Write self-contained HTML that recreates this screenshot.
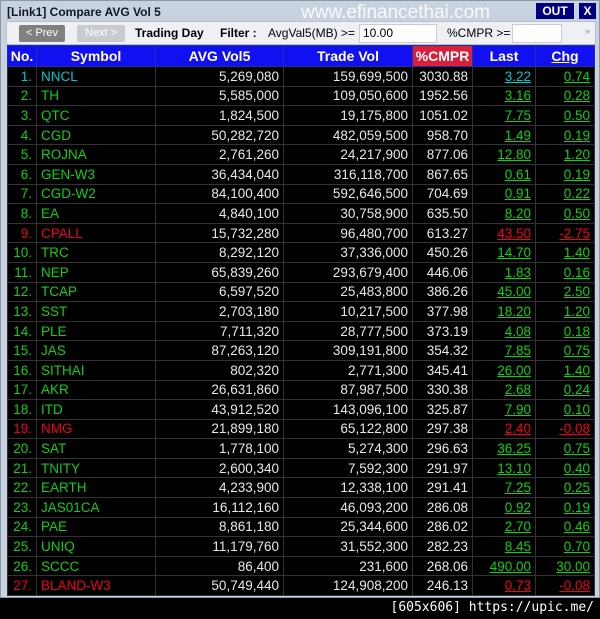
<!DOCTYPE html>
<html><head><meta charset="utf-8"><style>
*{margin:0;padding:0;box-sizing:border-box}
body{width:600px;height:619px;background:#000;font-family:"Liberation Sans",Arial,sans-serif;position:relative;overflow:hidden}
#win{position:absolute;left:0;top:0;width:600px;height:598px;background:#c9d3df;border:1px solid #8a98a8}
#title{position:absolute;left:6px;top:4px;font-size:12px;font-weight:bold;color:#101828}
#wm{position:absolute;left:300px;top:1px;font-size:19px;color:#fff;opacity:.9}
.btnT{position:absolute;top:2px;height:16px;background:#000080;color:#fff;font-weight:bold;font-size:12px;text-align:center;line-height:16px}
#tb{position:absolute;left:5px;top:20px;width:590px;height:24px;background:#eef0f3;border:1px solid #b8c0cc}
.tbb{position:absolute;top:3px;height:17px;border-radius:2px;font-size:11px;color:#fff;text-align:center;line-height:17px}
.t{position:absolute;top:4px;font-size:12px;color:#000}
.inp{position:absolute;top:2px;height:19px;background:#fff;border:1px solid #ccc;font-size:12px;line-height:17px;padding-left:3px}
table{position:absolute;left:7px;top:45px;border-collapse:collapse;width:587px;table-layout:fixed;background:#000}
th{background:#1010f0;color:#fff;font-size:14px;font-weight:bold;height:21px;border:1px solid #2030a0;text-align:center}
td{height:19.6px;font-size:13.5px;border:1px solid #333;padding:0 4px;white-space:nowrap;color:#e8e8e8;background:#000}
td.n{text-align:right}
td.l{text-align:right;text-decoration:underline}
tr.c td.s,tr.c td.i{color:#00c8c8}
tr.g td.s,tr.g td.i{color:#10d010}
tr.r td.s,tr.r td.i{color:#f00020}
td.i{text-align:right}
.cy{color:#00c8c8!important}.gr{color:#10d010!important}.rd{color:#f00020!important}
#foot{position:absolute;right:6px;top:600px;color:#fff;font-size:13px;font-family:"DejaVu Sans Mono",monospace}
</style></head><body>
<div id="win">
<div id="title">[Link1] Compare AVG Vol 5</div>
<div id="wm">www.efinancethai.com</div>
<div class="btnT" style="left:535px;width:38px">OUT</div>
<div class="btnT" style="left:578px;width:17px">X</div>
<div id="tb">
<div class="tbb" style="left:12px;width:46px;background:#808080">&lt; Prev</div>
<div class="tbb" style="left:70px;width:48px;background:#c8ccd0">Next &gt;</div>
<div class="t" style="left:128px;font-weight:bold">Trading Day</div>
<div class="t" style="left:213px;font-weight:bold">Filter :</div>
<div class="t" style="left:261px">AvgVal5(MB) &gt;=</div>
<div class="inp" style="left:352px;width:78px">10.00</div>
<div class="t" style="left:440px">%CMPR &gt;=</div>
<div class="inp" style="left:505px;width:50px"></div>
<div class="t" style="left:578px;font-size:9px;color:#888">»</div>
</div>
</div>
<table>
<colgroup><col style="width:29px"><col style="width:119px"><col style="width:128px"><col style="width:129px"><col style="width:60px"><col style="width:63px"><col style="width:59px"></colgroup>
<tr><th>No.</th><th>Symbol</th><th>AVG Vol5</th><th>Trade Vol</th><th style="background:#d8203c">%CMPR</th><th>Last</th><th style="text-decoration:underline">Chg</th></tr>
<tr class="c"><td class="i">1.</td><td class="s">NNCL</td><td class="n">5,269,080</td><td class="n">159,699,500</td><td class="n">3030.88</td><td class="l cy">3.22</td><td class="l gr">0.74</td></tr>
<tr class="g"><td class="i">2.</td><td class="s">TH</td><td class="n">5,585,000</td><td class="n">109,050,600</td><td class="n">1952.56</td><td class="l gr">3.16</td><td class="l gr">0.28</td></tr>
<tr class="g"><td class="i">3.</td><td class="s">QTC</td><td class="n">1,824,500</td><td class="n">19,175,800</td><td class="n">1051.02</td><td class="l gr">7.75</td><td class="l gr">0.50</td></tr>
<tr class="g"><td class="i">4.</td><td class="s">CGD</td><td class="n">50,282,720</td><td class="n">482,059,500</td><td class="n">958.70</td><td class="l gr">1.49</td><td class="l gr">0.19</td></tr>
<tr class="g"><td class="i">5.</td><td class="s">ROJNA</td><td class="n">2,761,260</td><td class="n">24,217,900</td><td class="n">877.06</td><td class="l gr">12.80</td><td class="l gr">1.20</td></tr>
<tr class="g"><td class="i">6.</td><td class="s">GEN-W3</td><td class="n">36,434,040</td><td class="n">316,118,700</td><td class="n">867.65</td><td class="l gr">0.61</td><td class="l gr">0.19</td></tr>
<tr class="g"><td class="i">7.</td><td class="s">CGD-W2</td><td class="n">84,100,400</td><td class="n">592,646,500</td><td class="n">704.69</td><td class="l gr">0.91</td><td class="l gr">0.22</td></tr>
<tr class="g"><td class="i">8.</td><td class="s">EA</td><td class="n">4,840,100</td><td class="n">30,758,900</td><td class="n">635.50</td><td class="l gr">8.20</td><td class="l gr">0.50</td></tr>
<tr class="r"><td class="i">9.</td><td class="s">CPALL</td><td class="n">15,732,280</td><td class="n">96,480,700</td><td class="n">613.27</td><td class="l rd">43.50</td><td class="l rd">-2.75</td></tr>
<tr class="g"><td class="i">10.</td><td class="s">TRC</td><td class="n">8,292,120</td><td class="n">37,336,000</td><td class="n">450.26</td><td class="l gr">14.70</td><td class="l gr">1.40</td></tr>
<tr class="g"><td class="i">11.</td><td class="s">NEP</td><td class="n">65,839,260</td><td class="n">293,679,400</td><td class="n">446.06</td><td class="l gr">1.83</td><td class="l gr">0.16</td></tr>
<tr class="g"><td class="i">12.</td><td class="s">TCAP</td><td class="n">6,597,520</td><td class="n">25,483,800</td><td class="n">386.26</td><td class="l gr">45.00</td><td class="l gr">2.50</td></tr>
<tr class="g"><td class="i">13.</td><td class="s">SST</td><td class="n">2,703,180</td><td class="n">10,217,500</td><td class="n">377.98</td><td class="l gr">18.20</td><td class="l gr">1.20</td></tr>
<tr class="g"><td class="i">14.</td><td class="s">PLE</td><td class="n">7,711,320</td><td class="n">28,777,500</td><td class="n">373.19</td><td class="l gr">4.08</td><td class="l gr">0.18</td></tr>
<tr class="g"><td class="i">15.</td><td class="s">JAS</td><td class="n">87,263,120</td><td class="n">309,191,800</td><td class="n">354.32</td><td class="l gr">7.85</td><td class="l gr">0.75</td></tr>
<tr class="g"><td class="i">16.</td><td class="s">SITHAI</td><td class="n">802,320</td><td class="n">2,771,300</td><td class="n">345.41</td><td class="l gr">26.00</td><td class="l gr">1.40</td></tr>
<tr class="g"><td class="i">17.</td><td class="s">AKR</td><td class="n">26,631,860</td><td class="n">87,987,500</td><td class="n">330.38</td><td class="l gr">2.68</td><td class="l gr">0.24</td></tr>
<tr class="g"><td class="i">18.</td><td class="s">ITD</td><td class="n">43,912,520</td><td class="n">143,096,100</td><td class="n">325.87</td><td class="l gr">7.90</td><td class="l gr">0.10</td></tr>
<tr class="r"><td class="i">19.</td><td class="s">NMG</td><td class="n">21,899,180</td><td class="n">65,122,800</td><td class="n">297.38</td><td class="l rd">2.40</td><td class="l rd">-0.08</td></tr>
<tr class="g"><td class="i">20.</td><td class="s">SAT</td><td class="n">1,778,100</td><td class="n">5,274,300</td><td class="n">296.63</td><td class="l gr">36.25</td><td class="l gr">0.75</td></tr>
<tr class="g"><td class="i">21.</td><td class="s">TNITY</td><td class="n">2,600,340</td><td class="n">7,592,300</td><td class="n">291.97</td><td class="l gr">13.10</td><td class="l gr">0.40</td></tr>
<tr class="g"><td class="i">22.</td><td class="s">EARTH</td><td class="n">4,233,900</td><td class="n">12,338,100</td><td class="n">291.41</td><td class="l gr">7.25</td><td class="l gr">0.25</td></tr>
<tr class="g"><td class="i">23.</td><td class="s">JAS01CA</td><td class="n">16,112,160</td><td class="n">46,093,200</td><td class="n">286.08</td><td class="l gr">0.92</td><td class="l gr">0.19</td></tr>
<tr class="g"><td class="i">24.</td><td class="s">PAE</td><td class="n">8,861,180</td><td class="n">25,344,600</td><td class="n">286.02</td><td class="l gr">2.70</td><td class="l gr">0.46</td></tr>
<tr class="g"><td class="i">25.</td><td class="s">UNIQ</td><td class="n">11,179,760</td><td class="n">31,552,300</td><td class="n">282.23</td><td class="l gr">8.45</td><td class="l gr">0.70</td></tr>
<tr class="g"><td class="i">26.</td><td class="s">SCCC</td><td class="n">86,400</td><td class="n">231,600</td><td class="n">268.06</td><td class="l gr">490.00</td><td class="l gr">30.00</td></tr>
<tr class="r"><td class="i">27.</td><td class="s">BLAND-W3</td><td class="n">50,749,440</td><td class="n">124,908,200</td><td class="n">246.13</td><td class="l rd">0.73</td><td class="l rd">-0.08</td></tr>
</table>
<div id="foot">[605x606] https://upic.me/</div>
</body></html>
